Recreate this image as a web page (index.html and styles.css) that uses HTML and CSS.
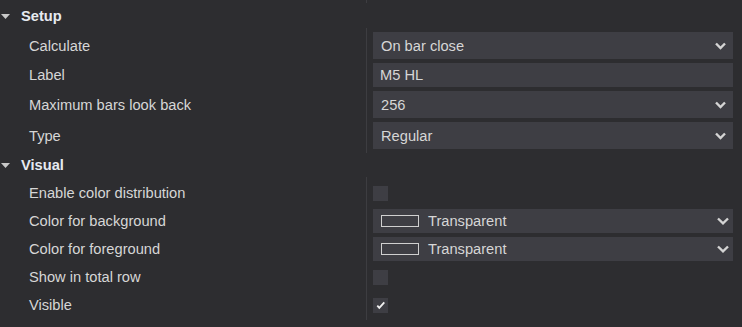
FILE: index.html
```html
<!DOCTYPE html>
<html>
<head>
<meta charset="utf-8">
<link rel="stylesheet" href="styles.css">
</head>
<body>
<div class="grid">
  <div class="body tail">
    <div class="labels"></div>
    <div class="values"></div>
  </div>

  <div class="header">
    <svg class="tri" width="9" height="5" viewBox="0 0 9 5"><polygon points="0,0 9,0 4.5,5" fill="#c8c8c8"/></svg>
    <span>Setup</span>
  </div>
  <div class="body">
    <div class="labels">
      <div class="row tall">Calculate</div>
      <div class="row">Label</div>
      <div class="row tall">Maximum bars look back</div>
      <div class="row tall">Type</div>
    </div>
    <div class="values">
      <div class="row tall"><div class="select"><span class="txt">On bar close</span><svg class="chev" width="11" height="8" viewBox="0 0 11 8"><path d="M1 1.5 L5.5 6 L10 1.5" fill="none" stroke="#d4d4d4" stroke-width="2.4"/></svg></div></div>
      <div class="row"><div class="input">M5 HL</div></div>
      <div class="row tall"><div class="select"><span class="txt">256</span><svg class="chev" width="11" height="8" viewBox="0 0 11 8"><path d="M1 1.5 L5.5 6 L10 1.5" fill="none" stroke="#d4d4d4" stroke-width="2.4"/></svg></div></div>
      <div class="row tall"><div class="select"><span class="txt">Regular</span><svg class="chev" width="11" height="8" viewBox="0 0 11 8"><path d="M1 1.5 L5.5 6 L10 1.5" fill="none" stroke="#d4d4d4" stroke-width="2.4"/></svg></div></div>
    </div>
  </div>

  <div class="header">
    <svg class="tri" width="9" height="5" viewBox="0 0 9 5"><polygon points="0,0 9,0 4.5,5" fill="#c8c8c8"/></svg>
    <span>Visual</span>
  </div>
  <div class="body visual">
    <div class="labels">
      <div class="row">Enable color distribution</div>
      <div class="row">Color for background</div>
      <div class="row">Color for foreground</div>
      <div class="row">Show in total row</div>
      <div class="row">Visible</div>
    </div>
    <div class="values">
      <div class="row"><div class="check"></div></div>
      <div class="row"><div class="select brush"><span class="swatch"></span><span class="txt">Transparent</span><svg class="chev big" width="12" height="8" viewBox="0 0 12 8"><path d="M1 1.5 L6 6.3 L11 1.5" fill="none" stroke="#d4d4d4" stroke-width="2.4"/></svg></div></div>
      <div class="row"><div class="select brush"><span class="swatch"></span><span class="txt">Transparent</span><svg class="chev big" width="12" height="8" viewBox="0 0 12 8"><path d="M1 1.5 L6 6.3 L11 1.5" fill="none" stroke="#d4d4d4" stroke-width="2.4"/></svg></div></div>
      <div class="row"><div class="check"></div></div>
      <div class="row"><div class="check"><svg width="15" height="15" viewBox="0 0 15 15"><path d="M4.3 7.6 L6.3 9.8 L11.3 4.3" fill="none" stroke="#f0f0f0" stroke-width="1.8"/></svg></div></div>
    </div>
  </div>
</div>
</body>
</html>
```

FILE: styles.css
```css
* { box-sizing: border-box; }
html, body {
  margin: 0;
  padding: 0;
  background: #2d2d30;
}
body {
  width: 742px;
  height: 327px;
  overflow: hidden;
  font-family: "Liberation Sans", Arial, sans-serif;
  font-size: 14.67px;
  color: #d6d6d6;
}
.grid {
  display: flex;
  flex-direction: column;
}
.header {
  height: 24px;
  display: flex;
  align-items: center;
  font-weight: bold;
  color: #e6eaf0;
}
.header .tri {
  margin-left: 1px;
  margin-right: 11px;
  flex: none;
}
.body {
  display: flex;
}
.body.tail {
  height: 4px;
}
.body.tail .values {
  padding: 0;
  margin-bottom: 1px;
}
.labels {
  width: 366px;
  flex: none;
  padding: 2px 0;
}
.values {
  flex: 1;
  border-left: 1px solid #3d3d41;
  padding: 2px 9px 2px 6px;
}
.visual .labels, .visual .values {
  padding-bottom: 1px;
}
.row {
  height: 28px;
  display: flex;
  align-items: center;
}
.row.tall {
  height: 31px;
}
.labels .row {
  padding-left: 29px;
}
.select {
  width: 100%;
  height: 27px;
  background: #3e3e44;
  display: flex;
  align-items: center;
  padding: 0 7px 0 8px;
}
.select .txt {
  flex: 1;
}
.select.brush {
  height: 24px;
}
.chev {
  flex: none;
}
.chev.big {
  margin-right: -3px;
}
.swatch {
  width: 38px;
  height: 12px;
  border: 1px solid #d0d0d0;
  margin-right: 9px;
  flex: none;
}
.input {
  width: 100%;
  height: 24px;
  background: #3e3e44;
  display: flex;
  align-items: center;
  padding: 0 7px;
}
.check {
  width: 15px;
  height: 15px;
  background: #3e3e44;
  display: flex;
}
```
